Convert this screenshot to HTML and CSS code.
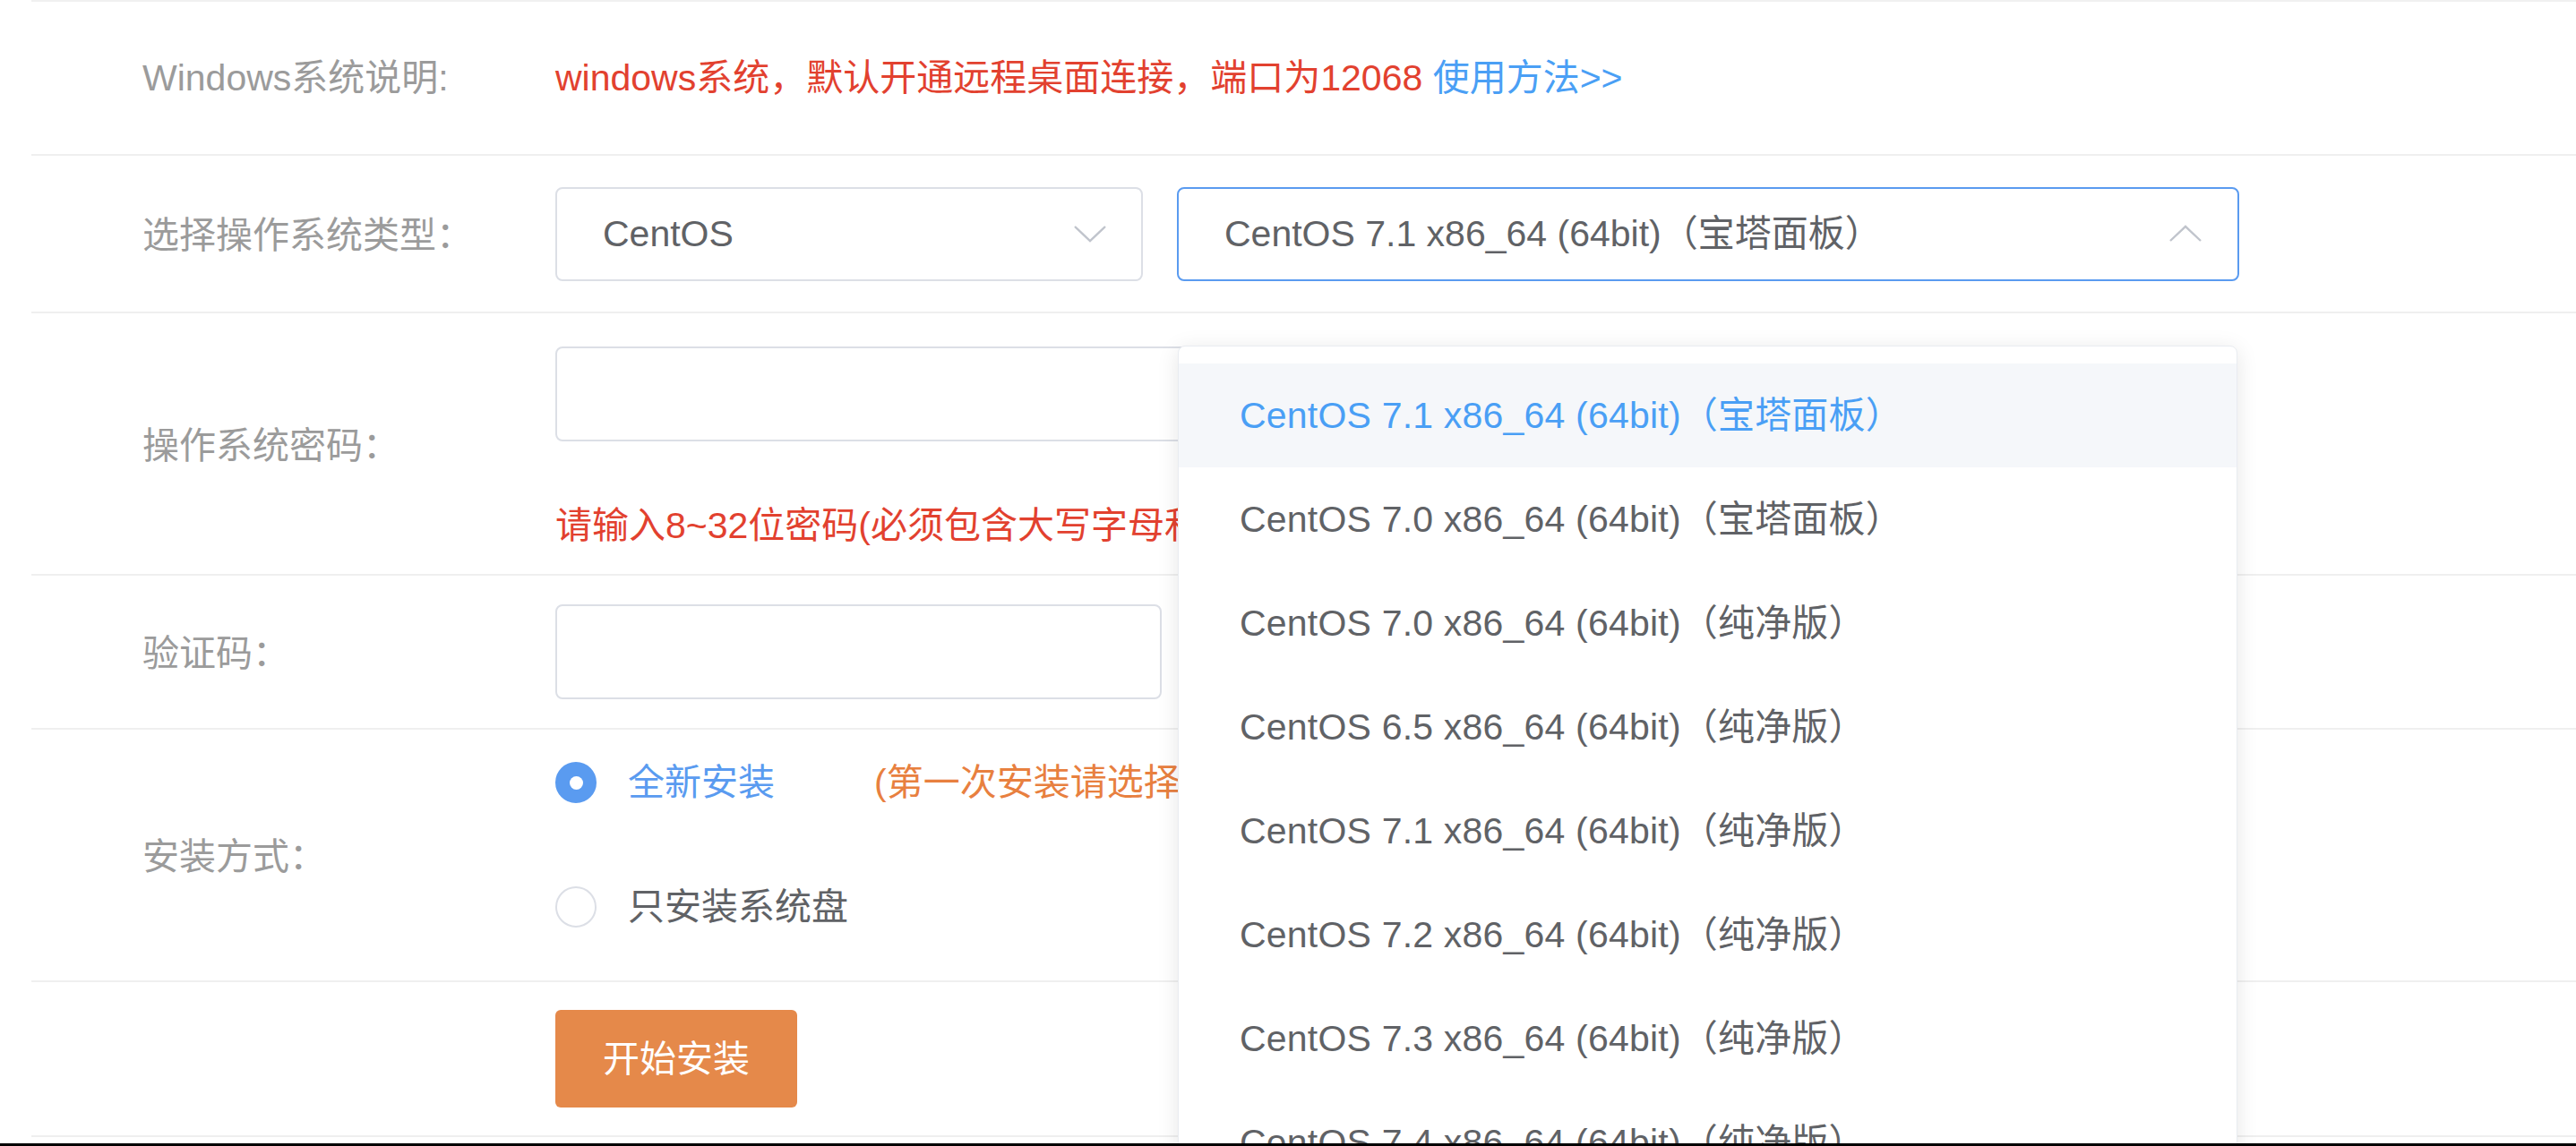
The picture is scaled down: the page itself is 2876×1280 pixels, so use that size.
FILE: index.html
```html
<!DOCTYPE html>
<html lang="zh-CN">
<head>
<meta charset="utf-8">
<title>重装系统</title>
<link rel="stylesheet" href="styles.css">
</head>
<body>
<div class="screen">
  <div class="form">
    <div class="row row-info">
      <div class="label">Windows系统说明:</div>
      <div class="control"><span class="warn">windows系统，默认开通远程桌面连接，端口为12068</span> <span class="link">使用方法&gt;&gt;</span></div>
    </div>

    <div class="row row-os">
      <div class="label">选择操作系统类型<span class="colon">：</span></div>
      <div class="control selects">
        <div class="select select-type">
          <span class="select-text">CentOS</span>
          <svg class="chev" width="36" height="20" viewBox="0 0 36 20"><polyline points="1,2 18,18 35,2" fill="none" stroke="#c0c4cc" stroke-width="2.4"/></svg>
        </div>
        <div class="select select-ver is-open">
          <span class="select-text">CentOS 7.1 x86_64 (64bit)（宝塔面板）</span>
          <svg class="chev" width="36" height="20" viewBox="0 0 36 20"><polyline points="1,18 18,2 35,18" fill="none" stroke="#c0c4cc" stroke-width="2.4"/></svg>
          <ul class="dropdown">
            <li class="option selected">CentOS 7.1 x86_64 (64bit)（宝塔面板）</li>
            <li class="option">CentOS 7.0 x86_64 (64bit)（宝塔面板）</li>
            <li class="option">CentOS 7.0 x86_64 (64bit)（纯净版）</li>
            <li class="option">CentOS 6.5 x86_64 (64bit)（纯净版）</li>
            <li class="option">CentOS 7.1 x86_64 (64bit)（纯净版）</li>
            <li class="option">CentOS 7.2 x86_64 (64bit)（纯净版）</li>
            <li class="option">CentOS 7.3 x86_64 (64bit)（纯净版）</li>
            <li class="option">CentOS 7.4 x86_64 (64bit)（纯净版）</li>
          </ul>
        </div>
      </div>
    </div>

    <div class="row row-pwd">
      <div class="label">操作系统密码<span class="colon">：</span></div>
      <div class="control stack">
        <div class="input input-pwd"></div>
        <div class="hint">请输入8~32位密码(必须包含大写字母和小写字母以及数字)</div>
      </div>
    </div>

    <div class="row row-code">
      <div class="label">验证码<span class="colon">：</span></div>
      <div class="control">
        <div class="input input-code"></div>
      </div>
    </div>

    <div class="row row-mode">
      <div class="label">安装方式<span class="colon">：</span></div>
      <div class="control radios">
        <div class="radio-opt">
          <span class="radio checked"></span>
          <span class="radio-label active">全新安装</span>
          <span class="radio-note">(第一次安装请选择全新安装)</span>
        </div>
        <div class="radio-opt">
          <span class="radio"></span>
          <span class="radio-label">只安装系统盘</span>
        </div>
      </div>
    </div>

    <div class="row row-submit">
      <div class="label"></div>
      <div class="control">
        <div class="btn">开始安装</div>
      </div>
    </div>
  </div>
</div>
<div class="bottom-bar"></div>
</body>
</html>
```

FILE: styles.css
```css
* {
  box-sizing: border-box;
  margin: 0;
  padding: 0;
}

html,
body {
  height: 1280px;
  overflow: hidden;
  background: #ffffff;
}

body {
  font-family: "Liberation Sans", "Noto Sans CJK SC", sans-serif;
  font-size: 41px;
  color: #606266;
}

.screen {
  position: relative;
  height: 1277px;
  overflow: hidden;
}

.form {
  margin-left: 35px;
  border-top: 2px solid #f0f0f0;
}

.row {
  display: flex;
  align-items: center;
  padding-left: 124px;
  border-bottom: 2px solid #efefef;
}

.label {
  width: 461px;
  flex-shrink: 0;
  color: #9b9b9b;
  line-height: 56px;
  white-space: nowrap;
}

.colon {
  font-family: "Noto Sans CJK TC", "Noto Sans CJK SC", sans-serif;
}

.control {
  line-height: 56px;
  white-space: nowrap;
}

.row-info { height: 172px; }
.row-os { height: 176px; }
.row-pwd { height: 293px; }
.row-code { height: 172px; }
.row-mode { height: 282px; }
.row-submit { height: 173px; }

.warn {
  color: #e2412f;
}

.link {
  color: #4a9ff5;
}

.selects {
  display: flex;
  gap: 38px;
}

.select {
  position: relative;
  display: flex;
  align-items: center;
  justify-content: space-between;
  height: 105px;
  padding: 0 39px 0 51px;
  border: 2px solid #dcdfe6;
  border-radius: 8px;
  background: #fff;
}

.select-type {
  width: 656px;
}

.select-ver {
  width: 1186px;
  padding-right: 40px;
}

.select.is-open {
  border-color: #5a9bf0;
}

.select-text {
  color: #606266;
}

.dropdown {
  position: absolute;
  top: calc(100% + 74px);
  left: -1px;
  right: 0;
  list-style: none;
  padding-top: 19px;
  background: #fff;
  border: 1px solid #e9ecf1;
  border-radius: 8px;
  box-shadow: 0 4px 24px rgba(0, 0, 0, 0.1);
  z-index: 5;
}

.option {
  height: 116px;
  line-height: 116px;
  padding-left: 68px;
  color: #606266;
  letter-spacing: 0.2px;
}

.option.selected {
  background: #f5f7fa;
  color: #4a9ff5;
}

.stack {
  display: flex;
  flex-direction: column;
  align-self: stretch;
  padding: 37px 0 26px;
}

.input {
  height: 106px;
  border: 2px solid #dcdfe6;
  border-radius: 8px;
  background: #fff;
}

.input-pwd {
  width: 900px;
}

.input-code {
  width: 677px;
}

.hint {
  margin-top: 66px;
  color: #e2412f;
}

.radios {
  display: flex;
  flex-direction: column;
  gap: 81px;
  align-self: stretch;
  padding: 30px 0 53px;
}

.radio-opt {
  display: flex;
  align-items: center;
  height: 58px;
}

.radio {
  width: 46px;
  height: 46px;
  border: 2px solid #dcdfe6;
  border-radius: 50%;
  margin-right: 35px;
  flex-shrink: 0;
  background: #fff;
}

.radio.checked {
  display: flex;
  align-items: center;
  justify-content: center;
  background: #5a9bf0;
  border-color: #5a9bf0;
}

.radio.checked::after {
  content: "";
  width: 15px;
  height: 15px;
  border-radius: 50%;
  background: #fff;
}

.radio-label {
  color: #606266;
}

.radio-label.active {
  color: #5a9bf0;
}

.radio-note {
  margin-left: 111px;
  color: #e8803f;
}

.btn {
  display: flex;
  align-items: center;
  justify-content: center;
  width: 270px;
  height: 109px;
  border-radius: 6px;
  background: #e5894a;
  color: #ffffff;
}

.bottom-bar {
  height: 3px;
  background: #000;
}
```
